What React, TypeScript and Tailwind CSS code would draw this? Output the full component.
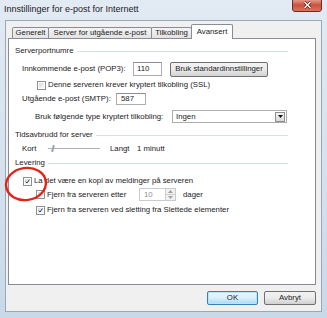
import React from 'react';

function Checkbox({ checked }: { checked?: boolean }) {
  return (
    <div className="w-[9px] h-[9px] shrink-0 border border-[#8e8f8f] bg-white p-px">
      <div className="w-full h-full bg-gradient-to-br from-[#d8d8d8] to-[#fbfbfb] flex items-center justify-center">
        {checked && (
          <svg width="7" height="7" viewBox="0 0 7 7">
            <path d="M1 3.6 L2.9 5.6 L6.2 0.8" fill="none" stroke="#1c3d72" strokeWidth="1.4" />
          </svg>
        )}
      </div>
    </div>
  );
}

function GroupHeader({ title }: { title: string }) {
  return (
    <div className="h-[14px] flex items-center">
      <span>{title}</span>
      <div className="flex-1 h-px bg-[#d5dfe5] ml-[3px]" />
    </div>
  );
}

function Tab({ label, width, active }: { label: string; width: string; active?: boolean }) {
  if (active) {
    return (
      <div
        className={`${width} h-[15px] -ml-px relative z-10 -mb-px bg-white border border-b-0 border-[#898c95] rounded-t-[2px] flex items-center justify-center`}
      >
        {label}
      </div>
    );
  }
  return (
    <div
      className={`${width} h-[11px] -ml-px first:ml-0 bg-gradient-to-b from-[#f3f3f3] to-[#e3e3e3] border border-b-0 border-[#898c95] rounded-t-[2px] flex items-center justify-center`}
    >
      {label}
    </div>
  );
}

export default function App() {
  return (
    <div className="w-[327px] h-[318px] relative overflow-hidden whitespace-nowrap bg-gradient-to-b from-[#e2eaf3] via-[#d6e2ee] to-[#c9d9e8] font-['Liberation_Sans',Arial,sans-serif] text-[7.8px] text-[#1b1b1b]">
      {/* title bar */}
      <div className="h-[20px] flex items-center pl-[4px] text-[9px] text-[#1e2228]">
        Innstillinger for e-post for Internett
      </div>
      <div className="absolute top-[-2px] right-[5px] w-[30px] h-[14px] rounded-b-[3px] border border-[#6f2a22] bg-gradient-to-b from-[#e6a597] via-[#c9503f] to-[#d8745e] flex items-center justify-center">
        <svg width="9" height="8" viewBox="0 0 9 8">
          <path d="M1.5 1 L7.5 7 M7.5 1 L1.5 7" stroke="#4a1a14" strokeWidth="2.6" />
          <path d="M1.5 1 L7.5 7 M7.5 1 L1.5 7" stroke="#ffffff" strokeWidth="1.4" />
        </svg>
      </div>

      {/* client area */}
      <div className="mx-[5px] h-[292px] bg-[#f0f0f0] border border-[#9aa7b5] pl-[2px] pr-[5px] pt-[3px] flex flex-col">
        <div className="flex items-end h-[14px] pl-[4px]">
          <Tab label="Generelt" width="w-[37px]" />
          <Tab label="Server for utgående e-post" width="w-[104px]" />
          <Tab label="Tilkobling" width="w-[41px]" />
          <Tab label="Avansert" width="w-[42px]" active />
        </div>

        <div className="h-[247px] bg-white border border-[#898c95] pl-[6px] pt-[5px]">
          <div className="w-[273px] flex flex-col">
            <GroupHeader title="Serverportnumre" />

            <div className="h-[16px] mt-[3px] flex items-center pl-[7px]">
              <span className="w-[111px] shrink-0">Innkommende e-post (POP3):</span>
              <div className="w-[29px] h-[14px] border border-[#abadb3] border-t-[#8b8e96] flex items-center pl-[3px]">110</div>
              <button className="ml-[8px] w-[98px] h-[15px] rounded-[2px] border border-[#707070] bg-gradient-to-b from-[#f2f2f2] via-[#ebebeb] to-[#d2d2d2] flex items-center justify-center">
                Bruk standardinnstillinger
              </button>
            </div>

            <div className="h-[14px] mt-px flex items-center pl-[22px]">
              <Checkbox />
              <span className="ml-[2px]">Denne serveren krever kryptert tilkobling (SSL)</span>
            </div>

            <div className="h-[14px] flex items-center pl-[7px]">
              <span className="w-[94px] shrink-0">Utgående e-post (SMTP):</span>
              <div className="w-[30px] h-[12px] border border-[#abadb3] border-t-[#8b8e96] flex items-center pl-[4px]">587</div>
            </div>

            <div className="h-[15px] mt-[3px] flex items-center pl-[20px]">
              <span className="w-[137px] shrink-0">Bruk følgende type kryptert tilkobling:</span>
              <div className="w-[115px] shrink-0 h-[13px] border border-[#abadb3] flex items-center justify-between pl-[3px] pr-px">
                <span>Ingen</span>
                <div className="w-[10px] h-[10px] border border-[#8e8f8f] bg-gradient-to-b from-[#f4f4f4] to-[#d9d9d9] flex items-center justify-center">
                  <svg width="5" height="3" viewBox="0 0 5 3">
                    <path d="M0 0 L5 0 L2.5 3 Z" fill="#111" />
                  </svg>
                </div>
              </div>
            </div>

            <div className="mt-[4px]">
              <GroupHeader title="Tidsavbrudd for server" />
            </div>

            <div className="h-[14px] flex items-center pl-[7px]">
              <span className="w-[26px] shrink-0">Kort</span>
              <div className="w-[52px] h-[14px] relative flex items-center">
                <div className="w-full h-[2px] border-t border-[#b3b3b3] border-b border-b-[#ffffff] bg-[#e6e6e6]" />
                <div className="absolute left-[4px] top-[3px] w-[2px] h-[7px] bg-[#9aa6b2] rotate-[15deg]" />
              </div>
              <span className="ml-[10px] w-[27px] shrink-0">Langt</span>
              <span>1 minutt</span>
            </div>

            <GroupHeader title="Levering" />

            <div className="h-[14px] mt-[4px] flex items-center pl-[8px]">
              <Checkbox checked />
              <span className="ml-[2px]">La det være en kopi av meldinger på serveren</span>
            </div>

            <div className="h-[13px] flex items-center pl-[21px]">
              <Checkbox />
              <span className="ml-[2px] w-[92px] shrink-0">Fjern fra serveren etter</span>
              <div className="w-[37px] shrink-0 h-[13px] border border-[#c9cbd0] flex items-center justify-between pl-[4px]">
                <span className="text-[#8d8d8d]">10</span>
                <div className="w-[10px] h-full flex flex-col border-l border-[#d0d0d0]">
                  <div className="flex-1 bg-[#f2f2f2] border-b border-[#d0d0d0] flex items-center justify-center">
                    <svg width="5" height="3" viewBox="0 0 5 3"><path d="M0 3 L5 3 L2.5 0 Z" fill="#a0a0a0" /></svg>
                  </div>
                  <div className="flex-1 bg-[#f2f2f2] flex items-center justify-center">
                    <svg width="5" height="3" viewBox="0 0 5 3"><path d="M0 0 L5 0 L2.5 3 Z" fill="#a0a0a0" /></svg>
                  </div>
                </div>
              </div>
              <span className="ml-[7px]">dager</span>
            </div>

            <div className="h-[14px] mt-[2px] flex items-center pl-[21px]">
              <Checkbox checked />
              <span className="ml-[2px]">Fjern fra serveren ved sletting fra Slettede elementer</span>
            </div>
          </div>
        </div>

        <div className="flex justify-end gap-[6px] mt-[6px]">
          <button className="w-[51px] h-[14px] rounded-[2px] border border-[#3c7fb1] bg-gradient-to-b from-[#eaf6fd] via-[#d9f0fc] to-[#a7d9f5] shadow-[inset_0_0_0_1px_#b6e4fb] flex items-center justify-center">
            OK
          </button>
          <button className="w-[52px] h-[14px] rounded-[2px] border border-[#707070] bg-gradient-to-b from-[#f2f2f2] via-[#ebebeb] to-[#d0d0d0] flex items-center justify-center">
            Avbryt
          </button>
        </div>
      </div>

      {/* red highlight circle */}
      <svg className="absolute left-0 top-0 pointer-events-none" width="327" height="318">
        <ellipse cx="26" cy="184" rx="20" ry="16" fill="none" stroke="#e2231a" strokeWidth="2.4" transform="rotate(-8 26 184)" />
      </svg>
    </div>
  );
}
